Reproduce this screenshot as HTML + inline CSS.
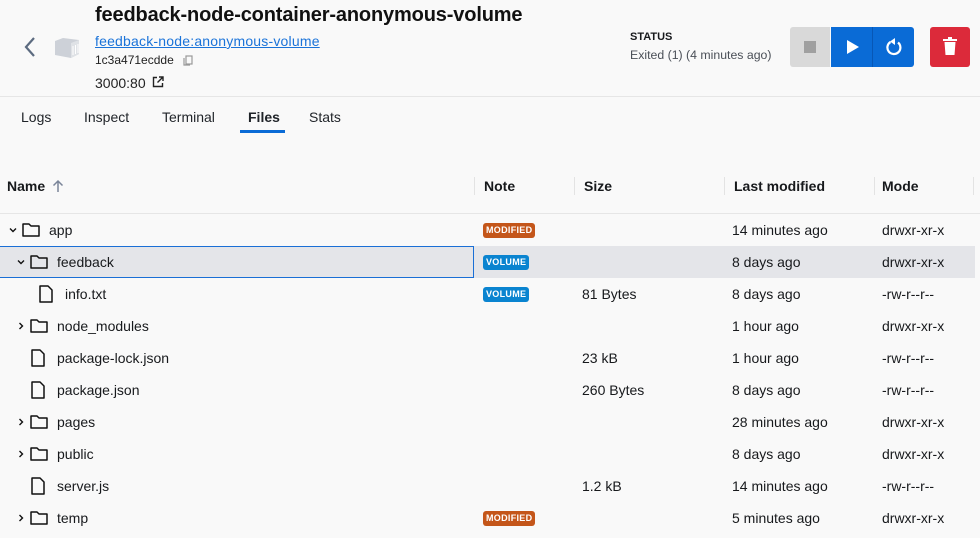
<!DOCTYPE html>
<html><head><style>
*{box-sizing:border-box;margin:0;padding:0}
body{width:980px;height:538px;background:#f9f9f9;font-family:"Liberation Sans",Arial,sans-serif;color:#17191c;position:relative;overflow:hidden}
.a{position:absolute;white-space:nowrap}
.tab{position:absolute;top:109px;font-size:14px;color:#1f2328}
.hd{position:absolute;top:178px;font-size:14px;font-weight:bold}
.sep{position:absolute;top:177px;width:1px;height:18px;background:#e3e3e3}
.row{position:absolute;left:0;width:975px;height:32px;font-size:14px}
.row span{position:absolute;top:8px}
.badge{position:absolute;top:9px;font-size:9px;font-weight:bold;color:#fff;padding:2px 3px;border-radius:3px;letter-spacing:.3px;line-height:11px}
.mod{background:#c4561a}
.vol{background:#0a84d0}
svg{position:absolute}
</style></head><body>
<svg style="left:22px;top:36px" width="16" height="22" viewBox="0 0 16 22"><path d="M12 2L4 11l8 9" fill="none" stroke="#5c6b80" stroke-width="2.2"/></svg>
<svg style="left:54px;top:36px" width="26" height="24" viewBox="0 0 26 24"><path d="M1 5l8-3 16 2v14l-8 4-16-3z" fill="#cdd1d8"/><path d="M17 7l8-3v14l-8 4z" fill="#dfe2e6"/><path d="M19 10v9M21.5 9v9M24 8v9" stroke="#fff" stroke-width="1"/></svg>
<div class="a" style="left:95px;top:4px;font-size:20px;font-weight:bold;color:#111;letter-spacing:-0.15px">feedback-node-container-anonymous-volume</div>
<div class="a" style="left:95px;top:33px;font-size:14px;color:#1a73d9;text-decoration:underline;letter-spacing:0.2px">feedback-node:anonymous-volume</div>
<div class="a" style="left:95px;top:53px;font-size:12px;color:#222">1c3a471ecdde</div>
<svg style="left:183px;top:55px" width="10" height="11" viewBox="0 0 10 11"><rect x="3" y="1" width="6" height="8" fill="none" stroke="#999" stroke-width="1.2"/><path d="M1 3v7h6" fill="none" stroke="#999" stroke-width="1.2"/></svg>
<div class="a" style="left:95px;top:75px;font-size:14px;color:#222">3000:80</div>
<svg style="left:152px;top:76px" width="12" height="12" viewBox="0 0 12 12"><path d="M5 1.5H1.5v9h9V7M7 1h4v4M11 1L5.5 6.5" fill="none" stroke="#222" stroke-width="1.4"/></svg>
<div class="a" style="left:630px;top:31px;font-size:11px;font-weight:bold">STATUS</div>
<div class="a" style="left:630px;top:48px;font-size:12.3px;color:#4a4f57">Exited (1) (4 minutes ago)</div>
<div class="a" style="left:790px;top:27px;width:40px;height:40px;background:#d9d9d9;border-radius:3px 0 0 3px"></div>
<div class="a" style="left:804px;top:41px;width:12px;height:12px;background:#a0a0a0"></div>
<div class="a" style="left:831px;top:27px;width:83px;height:40px;background:#0a6bd6;border-radius:0 3px 3px 0"></div>
<div class="a" style="left:872px;top:27px;width:1px;height:40px;background:#0757b6"></div>
<svg style="left:846px;top:39px" width="14" height="16" viewBox="0 0 14 16"><path d="M1 1l12 7-12 7z" fill="#fff"/></svg>
<svg style="left:883px;top:36px" width="22" height="22" viewBox="0 0 22 22"><path d="M7.5 6A6.5 6.5 0 1 0 15 6.5" fill="none" stroke="#fff" stroke-width="2.2"/><path d="M12 2v7l-5-3.5z" fill="#fff"/></svg>
<div class="a" style="left:930px;top:27px;width:40px;height:40px;background:#dc2a3a;border-radius:3px"></div>
<svg style="left:943px;top:37px" width="14" height="19" viewBox="0 0 14 19"><rect x="0" y="2" width="14" height="2" fill="#fff"/><rect x="5" y="0" width="4" height="2" fill="#fff"/><path d="M1.5 5h11l-1 13h-9z" fill="#fff"/></svg>
<div class="a" style="left:0;top:96px;width:980px;height:1px;background:#e6e6e6"></div>
<div class="tab" style="left:21px">Logs</div>
<div class="tab" style="left:84px">Inspect</div>
<div class="tab" style="left:162px">Terminal</div>
<div class="tab" style="left:248px;font-weight:bold">Files</div>
<div class="tab" style="left:309px">Stats</div>
<div class="a" style="left:240px;top:130px;width:45px;height:3px;background:#0a6bd6"></div>
<div class="hd" style="left:7px">Name</div>
<svg style="left:52px;top:179px" width="12" height="14" viewBox="0 0 12 14"><path d="M6 13V2M1.5 6.5L6 2l4.5 4.5" fill="none" stroke="#7a8599" stroke-width="1.5"/></svg>
<div class="sep" style="left:474px"></div><div class="hd" style="left:484px">Note</div>
<div class="sep" style="left:574px"></div><div class="hd" style="left:584px">Size</div>
<div class="sep" style="left:724px"></div><div class="hd" style="left:734px">Last modified</div>
<div class="sep" style="left:874px"></div><div class="hd" style="left:882px">Mode</div>
<div class="sep" style="left:973px"></div>
<div class="a" style="left:0;top:213px;width:980px;height:1px;background:#e6e6e6"></div>
<div class="a" style="left:0;top:246px;width:975px;height:32px;background:#e4e5e9"></div>
<div class="a" style="left:0;top:246px;width:474px;height:32px;border:1px solid #1a6fd6;border-left:none"></div>

<svg width="0" height="0" style="position:absolute"><defs>
<symbol id="fold" viewBox="0 0 18 16"><path d="M1 2h6l2 2h8v10H1z" fill="none" stroke="#111" stroke-width="1.5" stroke-linejoin="round"/></symbol>
<symbol id="file" viewBox="0 0 14 18"><path d="M1 1h8l4 4v12H1z" fill="none" stroke="#111" stroke-width="1.5" stroke-linejoin="round"/></symbol>
<symbol id="down" viewBox="0 0 10 10"><path d="M2 3.5l3 3 3-3" fill="none" stroke="#111" stroke-width="1.4"/></symbol>
<symbol id="right" viewBox="0 0 10 10"><path d="M3.5 2l3 3-3 3" fill="none" stroke="#111" stroke-width="1.4"/></symbol>
</defs></svg>

<div class="row" style="top:214px"><svg style="left:8px;top:11px" width="10" height="10"><use href="#down"/></svg><svg style="left:22px;top:8px" width="18" height="16"><use href="#fold"/></svg><span style="left:49px">app</span><div class="badge mod" style="left:483px">MODIFIED</div><span style="left:732px">14 minutes ago</span><span style="left:882px">drwxr-xr-x</span></div>
<div class="row" style="top:246px"><svg style="left:16px;top:11px" width="10" height="10"><use href="#down"/></svg><svg style="left:30px;top:8px" width="18" height="16"><use href="#fold"/></svg><span style="left:57px">feedback</span><div class="badge vol" style="left:483px">VOLUME</div><span style="left:732px">8 days ago</span><span style="left:882px">drwxr-xr-x</span></div>
<div class="row" style="top:278px"><svg style="left:39px;top:7px" width="14" height="18"><use href="#file"/></svg><span style="left:65px">info.txt</span><div class="badge vol" style="left:483px">VOLUME</div><span style="left:582px">81 Bytes</span><span style="left:732px">8 days ago</span><span style="left:882px">-rw-r--r--</span></div>
<div class="row" style="top:310px"><svg style="left:16px;top:11px" width="10" height="10"><use href="#right"/></svg><svg style="left:30px;top:8px" width="18" height="16"><use href="#fold"/></svg><span style="left:57px">node_modules</span><span style="left:732px">1 hour ago</span><span style="left:882px">drwxr-xr-x</span></div>
<div class="row" style="top:342px"><svg style="left:31px;top:7px" width="14" height="18"><use href="#file"/></svg><span style="left:57px">package-lock.json</span><span style="left:582px">23 kB</span><span style="left:732px">1 hour ago</span><span style="left:882px">-rw-r--r--</span></div>
<div class="row" style="top:374px"><svg style="left:31px;top:7px" width="14" height="18"><use href="#file"/></svg><span style="left:57px">package.json</span><span style="left:582px">260 Bytes</span><span style="left:732px">8 days ago</span><span style="left:882px">-rw-r--r--</span></div>
<div class="row" style="top:406px"><svg style="left:16px;top:11px" width="10" height="10"><use href="#right"/></svg><svg style="left:30px;top:8px" width="18" height="16"><use href="#fold"/></svg><span style="left:57px">pages</span><span style="left:732px">28 minutes ago</span><span style="left:882px">drwxr-xr-x</span></div>
<div class="row" style="top:438px"><svg style="left:16px;top:11px" width="10" height="10"><use href="#right"/></svg><svg style="left:30px;top:8px" width="18" height="16"><use href="#fold"/></svg><span style="left:57px">public</span><span style="left:732px">8 days ago</span><span style="left:882px">drwxr-xr-x</span></div>
<div class="row" style="top:470px"><svg style="left:31px;top:7px" width="14" height="18"><use href="#file"/></svg><span style="left:57px">server.js</span><span style="left:582px">1.2 kB</span><span style="left:732px">14 minutes ago</span><span style="left:882px">-rw-r--r--</span></div>
<div class="row" style="top:502px"><svg style="left:16px;top:11px" width="10" height="10"><use href="#right"/></svg><svg style="left:30px;top:8px" width="18" height="16"><use href="#fold"/></svg><span style="left:57px">temp</span><div class="badge mod" style="left:483px">MODIFIED</div><span style="left:732px">5 minutes ago</span><span style="left:882px">drwxr-xr-x</span></div>
</body></html>
